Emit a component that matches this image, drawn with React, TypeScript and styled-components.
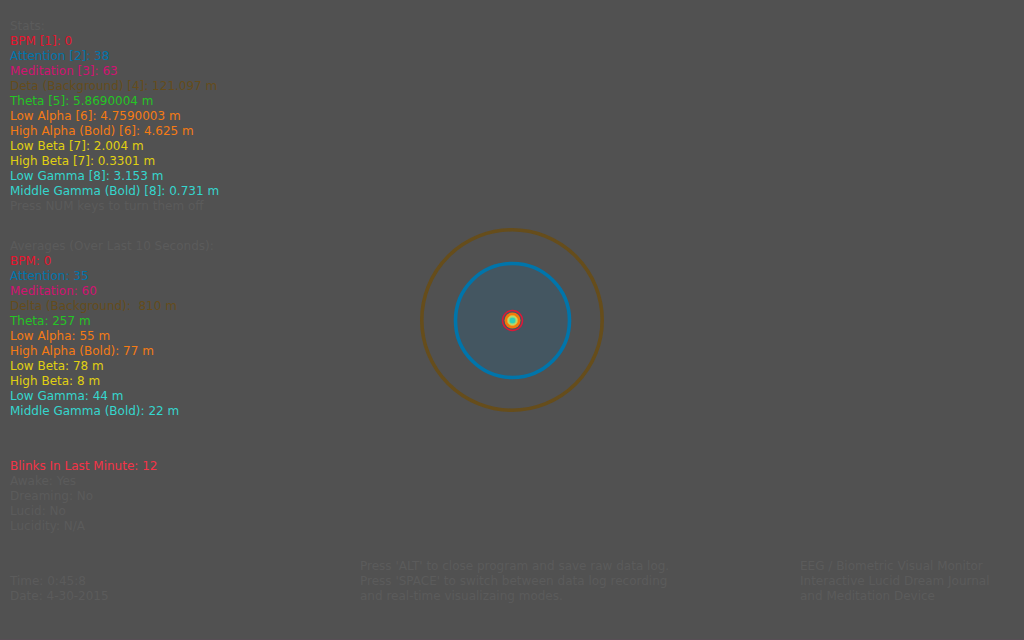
import React from "react";
import styled, { createGlobalStyle } from "styled-components";

const palette = {
  background: "#515151",
  muted: "#5b5b5b",
  red: "#e8142d",
  blue: "#0075ab",
  pink: "#d11272",
  brown: "#654c1b",
  green: "#25c425",
  orange: "#f57b14",
  yellow: "#e0d011",
  cyan: "#35d6ce",
  blink: "#f53347",
};

type Tone = keyof typeof palette;

const GlobalStyle = createGlobalStyle`
  * { box-sizing: border-box; }
  body {
    margin: 0;
    background: ${palette.background};
    font-family: Verdana, "DejaVu Sans", sans-serif;
    font-size: 12px;
    line-height: 15px;
  }
`;

const Screen = styled.main`
  display: grid;
  grid-template-columns: 350px 1fr 214px;
  grid-template-rows: 1fr;
  min-height: 100vh;
  padding: 0 10px;
  color: ${palette.muted};
  box-shadow: inset 0 -1px #574e55;
`;

const Readings = styled.div`
  grid-area: 1 / 1;
  display: flex;
  flex-direction: column;
  gap: 40px;
  padding: 19px 0 36px;
`;

const Tables = styled.div`
  display: flex;
  flex-direction: column;
  gap: 25px;
`;

const Group = styled.section``;

const Heading = styled.h2`
  margin: 0;
  font-size: inherit;
  font-weight: normal;
`;

const Line = styled.p<{ $tone?: Tone }>`
  margin: 0;
  white-space: pre;
  color: ${({ $tone = "muted" }) => palette[$tone]};
`;

const Note = styled.section<{ $column: number }>`
  grid-area: 1 / ${({ $column }) => $column};
  align-self: end;
  padding-bottom: 36px;
`;

const Visualizer = styled.svg`
  grid-area: 1 / 1 / 2 / -1;
  place-self: center;
  display: block;
`;

type Reading = { text: string; tone?: Tone };

const stats: Reading[] = [
  { text: "BPM [1]: 0", tone: "red" },
  { text: "Attention [2]: 38", tone: "blue" },
  { text: "Meditation [3]: 63", tone: "pink" },
  { text: "Deta (Background) [4]: 121.097 m", tone: "brown" },
  { text: "Theta [5]: 5.8690004 m", tone: "green" },
  { text: "Low Alpha [6]: 4.7590003 m", tone: "orange" },
  { text: "High Alpha (Bold) [6]: 4.625 m", tone: "orange" },
  { text: "Low Beta [7]: 2.004 m", tone: "yellow" },
  { text: "High Beta [7]: 0.3301 m", tone: "yellow" },
  { text: "Low Gamma [8]: 3.153 m", tone: "cyan" },
  { text: "Middle Gamma (Bold) [8]: 0.731 m", tone: "cyan" },
  { text: "Press NUM keys to turn them off" },
];

const averages: Reading[] = [
  { text: "BPM: 0", tone: "red" },
  { text: "Attention: 35", tone: "blue" },
  { text: "Meditation: 60", tone: "pink" },
  { text: "Delta (Background):  810 m", tone: "brown" },
  { text: "Theta: 257 m", tone: "green" },
  { text: "Low Alpha: 55 m", tone: "orange" },
  { text: "High Alpha (Bold): 77 m", tone: "orange" },
  { text: "Low Beta: 78 m", tone: "yellow" },
  { text: "High Beta: 8 m", tone: "yellow" },
  { text: "Low Gamma: 44 m", tone: "cyan" },
  { text: "Middle Gamma (Bold): 22 m", tone: "cyan" },
];

const state: Reading[] = [
  { text: "Blinks In Last Minute: 12", tone: "blink" },
  { text: "Awake: Yes" },
  { text: "Dreaming: No" },
  { text: "Lucid: No" },
  { text: "Lucidity: N/A" },
];

const clock: Reading[] = [{ text: "Time: 0:45:8" }, { text: "Date: 4-30-2015" }];

const help: Reading[] = [
  { text: "Press 'ALT' to close program and save raw data log." },
  { text: "Press 'SPACE' to switch between data log recording" },
  { text: "and real-time visualizaing modes." },
];

const about: Reading[] = [
  { text: "EEG / Biometric Visual Monitor" },
  { text: "Interactive Lucid Dream Journal" },
  { text: "and Meditation Device" },
];

const Lines = ({ items }: { items: Reading[] }) => (
  <>
    {items.map(({ text, tone }) => (
      <Line key={text} $tone={tone}>{text}</Line>
    ))}
  </>
);

export default function App() {
  return (
    <>
      <GlobalStyle />
      <Screen>
        <Visualizer width="184" height="184" viewBox="-92 -92 184 184" role="img" aria-label="Signal rings">
          <circle r="90.2" fill="none" stroke="#664d1b" strokeWidth="3.6" />
          <circle cx="0.5" cy="0.5" r="57" fill="#445661" stroke="#0075ab" strokeWidth="3.6" />
          <g transform="translate(0.5 0.5)">
            <circle r="10" fill="none" stroke="#dc1838" strokeWidth="1.5" />
            <circle r="8" fill="#f5780c" />
            <circle r="5" fill="#a8e58c" stroke="#e0b838" strokeWidth="1" />
            <circle r="3.6" fill="none" stroke="#b3d45c" strokeWidth="1" />
            <circle r="3" fill="#2fcfb8" />
          </g>
        </Visualizer>
        <Readings>
          <Tables>
            <Group>
              <Heading>Stats:</Heading>
              <Lines items={stats} />
            </Group>
            <Group>
              <Heading>Averages (Over Last 10 Seconds):</Heading>
              <Lines items={averages} />
            </Group>
          </Tables>
          <Group>
            <Lines items={state} />
          </Group>
        </Readings>
        <Note $column={1}><Lines items={clock} /></Note>
        <Note $column={2}><Lines items={help} /></Note>
        <Note $column={3}><Lines items={about} /></Note>
      </Screen>
    </>
  );
}
